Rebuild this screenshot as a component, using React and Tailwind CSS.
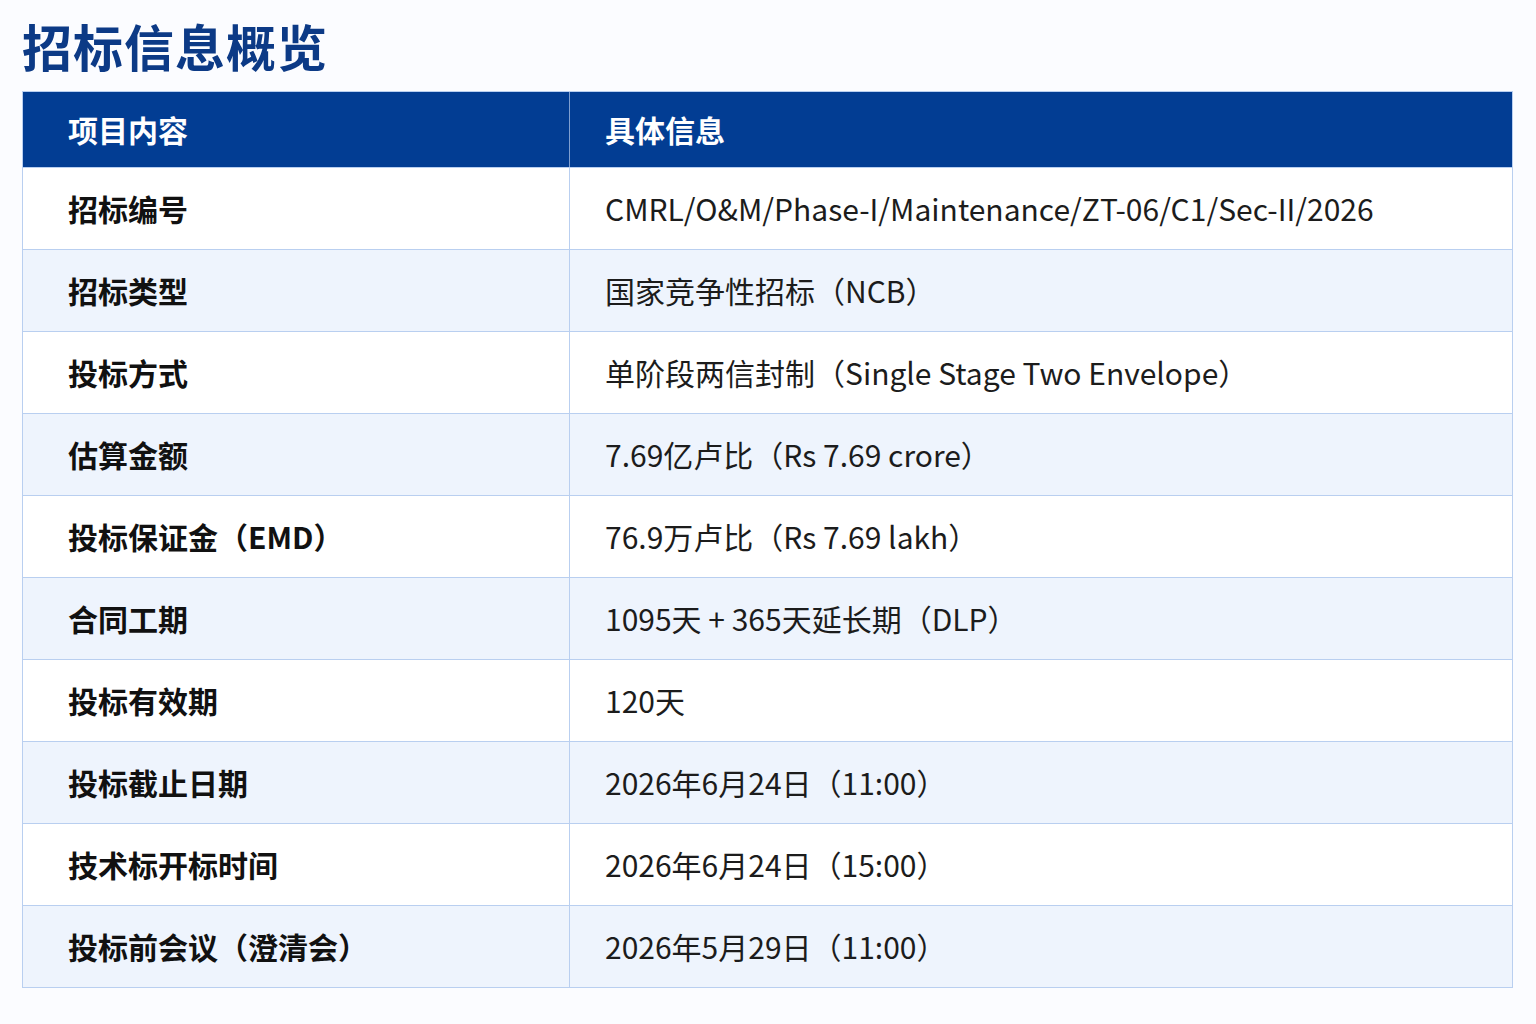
const rows = [
  ['招标编号', 'CMRL/O&M/Phase-I/Maintenance/ZT-06/C1/Sec-II/2026'],
  ['招标类型', '国家竞争性招标（NCB）'],
  ['投标方式', '单阶段两信封制（Single Stage Two Envelope）'],
  ['估算金额', '7.69亿卢比（Rs 7.69 crore）'],
  ['投标保证金（EMD）', '76.9万卢比（Rs 7.69 lakh）'],
  ['合同工期', '1095天 + 365天延长期（DLP）'],
  ['投标有效期', '120天'],
  ['投标截止日期', '2026年6月24日（11:00）'],
  ['技术标开标时间', '2026年6月24日（15:00）'],
  ['投标前会议（澄清会）', '2026年5月29日（11:00）'],
]

export default function App() {
  return (
    <div
      className="w-[1536px] h-[1024px] bg-[#fbfcff] px-[22px] pt-[12px]"
      style={{ fontFamily: '"Noto Sans CJK SC", "Noto Sans", sans-serif' }}
    >
      <h1 className="text-[50px] leading-[66px] font-bold text-[#0c3a86] tracking-[1px]">招标信息概览</h1>
      <div className="mt-[13px] w-[1491px] border border-[#b9cff0]">
        <div className="grid grid-cols-[547px_1fr] h-[75px] bg-[#023d93] text-white text-[30px] font-bold">
          <div className="pl-[45px] flex items-center border-r border-[#7f9fd0]">项目内容</div>
          <div className="pl-[35px] flex items-center">具体信息</div>
        </div>
        {rows.map(([k, v], i) => (
          <div
            key={k}
            className={`grid grid-cols-[547px_1fr] h-[82px] border-t border-[#b9cff0] ${i % 2 ? 'bg-[#eef4fd]' : 'bg-white'}`}
          >
            <div className="pl-[45px] flex items-center border-r border-[#b9cff0] text-[30px] font-bold text-[#111]">{k}</div>
            <div className="pl-[35px] flex items-center text-[30px] text-[#1c1c1c]">{v}</div>
          </div>
        ))}
      </div>
    </div>
  )
}
